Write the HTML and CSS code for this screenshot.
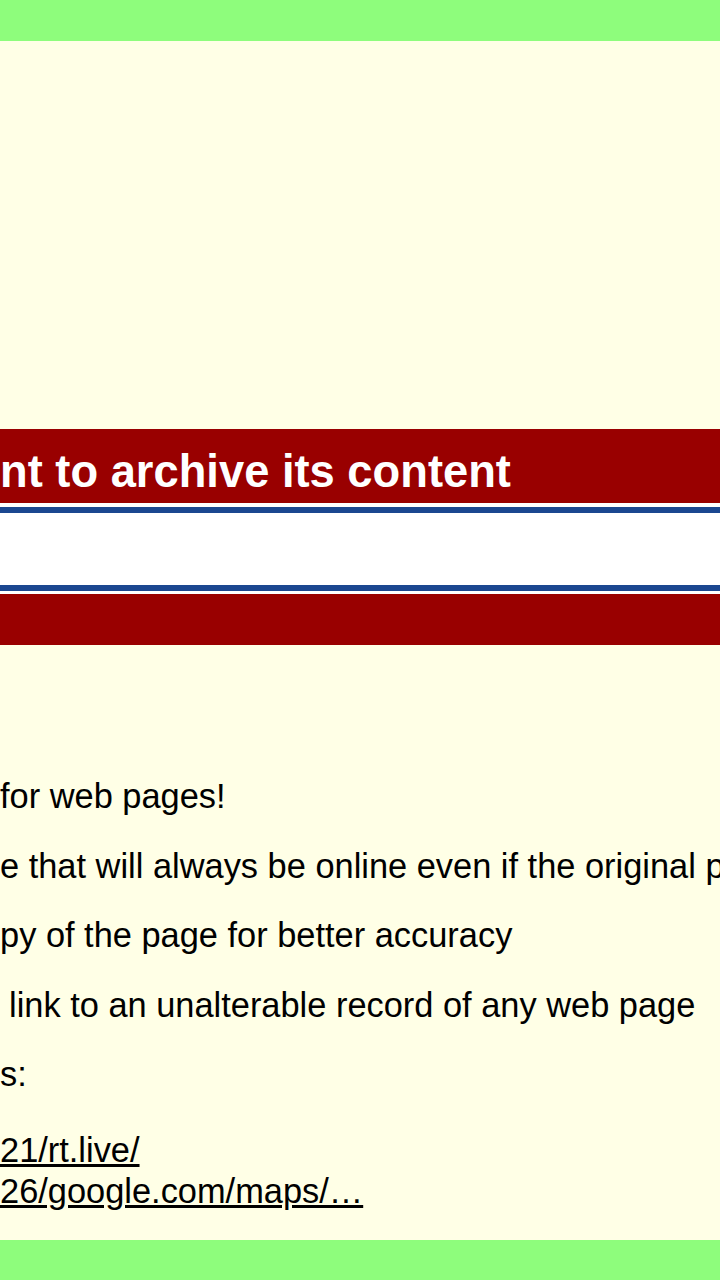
FILE: index.html
```html
<!DOCTYPE html>
<html lang="en">
<head>
<meta charset="utf-8">
<title>archive</title>
<link rel="stylesheet" href="styles.css">
</head>
<body>
<div class="page">
  <header class="topbar"></header>
  <main class="content">
    <h2 class="banner">nt to archive its content</h2>
    <div class="field-wrap"><div class="field"></div></div>
    <div class="banner banner--empty"></div>
    <div class="intro">
      <p class="line">for web pages!</p>
      <p class="line">e that will always be online even if the original p</p>
      <p class="line">py of the page for better accuracy</p>
      <p class="line line--indent">link to an unalterable record of any web page</p>
      <p class="line">s:</p>
      <div class="examples">
        <a class="example" href="#">21/rt.live/</a>
        <a class="example" href="#">26/google.com/maps/…</a>
      </div>
    </div>
  </main>
  <footer class="bottombar"></footer>
</div>
</body>
</html>
```

FILE: styles.css
```css
html, body {
  margin: 0;
  padding: 0;
}
body {
  background: #ffffe6;
  font-family: "Liberation Sans", Arial, Helvetica, sans-serif;
  color: #000;
}
.page {
  display: flex;
  flex-direction: column;
  height: 1280px;
  width: 720px;
  overflow: hidden;
}
.topbar {
  height: 41px;
  background: #8efd7c;
  flex: none;
}
.bottombar {
  height: 40px;
  background: #8efd7c;
  flex: none;
}
.content {
  flex: 1;
  padding-top: 388px;
  display: flex;
  flex-direction: column;
}
.banner {
  margin: 0;
  background: #990000;
  color: #fff;
  font-size: 45.3px;
  font-weight: bold;
  line-height: 63px;
  padding-top: 11px;
  white-space: nowrap;
}
.banner--empty {
  height: 51px;
  padding: 0;
}
.field-wrap {
  background: #fff;
  padding: 4px 0 3px;
}
.field {
  height: 72px;
  background: #fff;
  border-top: 6px solid #1b4790;
  border-bottom: 6px solid #1b4790;
}
.intro {
  margin-top: 117px;
  font-size: 34.4px;
  white-space: nowrap;
  overflow: hidden;
}
.line {
  margin: 0;
  line-height: 69.5px;
}
.line--indent {
  padding-left: 9px;
}
.examples {
  margin-top: 20px;
  display: flex;
  flex-direction: column;
  align-items: flex-start;
}
.example {
  color: #000;
  text-decoration: underline;
  line-height: 41px;
}
```
